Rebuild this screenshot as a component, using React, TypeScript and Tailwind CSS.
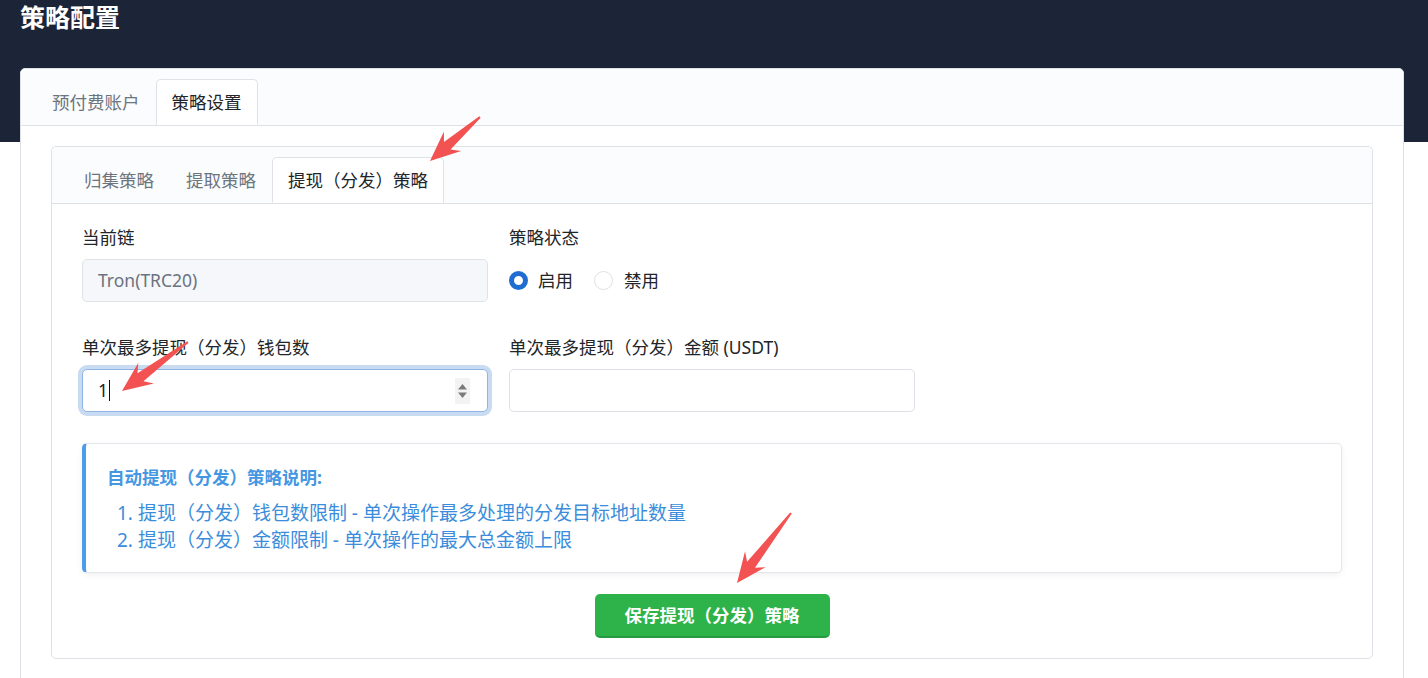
import React from "react";

const tabBase = "h-[46px] px-[15px] flex items-center border text-[17.5px] leading-[26px]";
const tabIdle = "border-transparent text-[#6c757d]";
const tabActive = "bg-white text-[#212529] border-[#dee2e6] border-b-white rounded-t-[5px] mb-[-1px]";

const Tab = ({ label, active }: { label: string; active?: boolean }) => (
  <div className={`${tabBase} ${active ? tabActive : tabIdle}`}>{label}</div>
);

const Field = ({ label, children }: { label: string; children: React.ReactNode }) => (
  <div className="flex flex-col">
    <div className="text-[17.5px] leading-[26px] text-[#212529] mb-[9px]">{label}</div>
    {children}
  </div>
);

// red pointer arrow, drawn from tail to tip
const Arrow = ({ from, to }: { from: [number, number]; to: [number, number] }) => {
  const dx = to[0] - from[0];
  const dy = to[1] - from[1];
  const len = Math.sqrt(dx * dx + dy * dy);
  const angle = (Math.atan2(dy, dx) * 180) / Math.PI;
  const pts = [
    [0, -1],
    [len - 23, -5],
    [len - 30, -13],
    [len, 0],
    [len - 30, 13],
    [len - 23, 5],
    [0, 1],
  ]
    .map((p) => p.join(","))
    .join(" ");
  return (
    <g transform={`translate(${from[0]} ${from[1]}) rotate(${angle})`}>
      <polygon points={pts} fill="#f25352" />
    </g>
  );
};

export default function App() {
  return (
    <div className="relative min-h-screen bg-[linear-gradient(to_bottom,#1b2537_142px,#ffffff_142px)] font-['Noto_Sans','Noto_Sans_CJK_SC',sans-serif] overflow-hidden">
      <h1 className="px-5 text-[25px] leading-[35px] font-bold text-white">策略配置</h1>

      <div className="mt-[33px] ml-5 mr-6 bg-white border border-[#dee2e6] rounded-[5px]">
        <div className="flex px-[15px] pt-[10px] bg-[#fbfcfe] border-b border-[#dee2e6] rounded-t-[5px]">
          <Tab label="预付费账户" />
          <Tab label="策略设置" active />
        </div>

        <div className="px-[30px] pt-5 pb-[30px]">
          <div className="border border-[#dee2e6] rounded-[5px]">
            <div className="flex px-[16px] pt-[10px] bg-[#fbfcfe] border-b border-[#dee2e6] rounded-t-[5px]">
              <Tab label="归集策略" />
              <Tab label="提取策略" />
              <Tab label="提现（分发）策略" active />
            </div>

            <div className="px-[30px] pt-5 pb-5">
              <div className="grid grid-cols-[406px_406px] gap-x-[21px] gap-y-8">
                <Field label="当前链">
                  <div className="h-[43px] flex items-center px-[15px] bg-[#f5f7fa] border border-[#dfe3e8] rounded-[5px] text-[17.5px] text-[#6b7280]">
                    Tron(TRC20)
                  </div>
                </Field>

                <Field label="策略状态">
                  <div className="h-[43px] flex items-center text-[17.5px] text-[#212529]">
                    <span className="w-[19px] h-[19px] rounded-full border-[5px] border-[#1f6dd1] bg-white" />
                    <span className="ml-[10px]">启用</span>
                    <span className="ml-[21px] w-[19px] h-[19px] rounded-full border border-[#dee2e6] bg-white" />
                    <span className="ml-[11px]">禁用</span>
                  </div>
                </Field>

                <Field label="单次最多提现（分发）钱包数">
                  <div className="h-[43px] flex items-center pl-[15px] pr-[17px] bg-white border border-[#8fb4e6] rounded-[5px] shadow-[0_0_0_4px_#c9dbf1] text-[17.5px] text-[#212529]">
                    <span>1</span>
                    <span className="w-px h-[21px] bg-[#111] ml-px" />
                    <span className="ml-auto w-[15px] h-[26px] bg-[#f3f3f3] flex items-center justify-center">
                      <svg width="11" height="20" viewBox="0 0 11 20">
                        <path d="M5.5 3 L10 8.5 H1 Z" fill="#7b7b7b" />
                        <path d="M1 11.5 H10 L5.5 17 Z" fill="#7b7b7b" />
                      </svg>
                    </span>
                  </div>
                </Field>

                <Field label="单次最多提现（分发）金额 (USDT)">
                  <div className="h-[43px] bg-white border border-[#dee2e6] rounded-[5px]" />
                </Field>
              </div>

              <div className="mt-[31px] pl-[21px] pr-5 pt-5 pb-[18px] border border-[#e3e6ea] border-l-4 border-l-[#4a9de6] rounded-[5px] shadow-[0_2px_6px_rgba(0,0,0,0.06)]">
                <div className="text-[17.5px] leading-[26px] font-bold text-[#4597e2]">自动提现（分发）策略说明:</div>
                <ol className="mt-[10px] pl-[10px] text-[19px] leading-[27px] text-[#3b8ddb]">
                  <li>1. 提现（分发）钱包数限制 - 单次操作最多处理的分发目标地址数量</li>
                  <li>2. 提现（分发）金额限制 - 单次操作的最大总金额上限</li>
                </ol>
              </div>

              <div className="mt-[21px] flex justify-center">
                <button className="h-[44px] px-[30px] bg-[#2db34a] border-b-2 border-[#259a3e] rounded-[5px] text-[17.5px] font-bold text-white">
                  保存提现（分发）策略
                </button>
              </div>
            </div>
          </div>
        </div>
      </div>

      <svg className="absolute inset-0 pointer-events-none" width="1428" height="678">
        <Arrow from={[480, 117]} to={[430, 161]} />
        <Arrow from={[188, 342]} to={[122, 391]} />
        <Arrow from={[791, 513]} to={[737, 583]} />
      </svg>
    </div>
  );
}
